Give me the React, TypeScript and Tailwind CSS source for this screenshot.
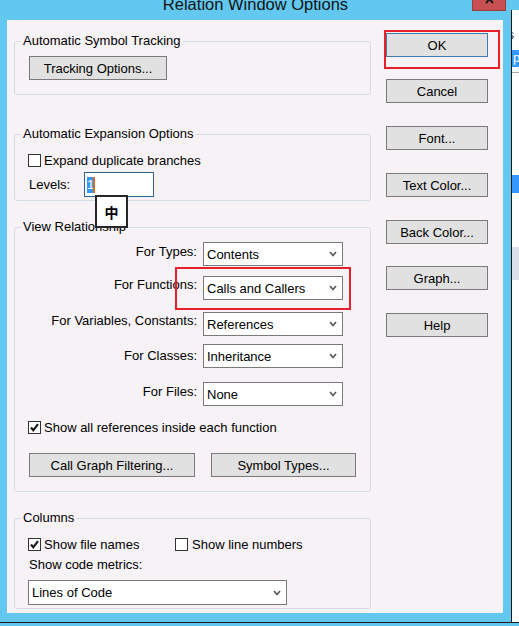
import React from "react";

function Group({ label, className, children }: { label: string; className: string; children?: React.ReactNode }) {
  return (
    <div className={`relative border border-[#d3dce4] rounded-[3px] ${className}`}>
      <span className="absolute left-[6px] -top-[9px] px-[2px] bg-[#f6f2f6] leading-[15px] whitespace-nowrap">{label}</span>
      {children}
    </div>
  );
}

function Btn({ children, className }: { children: React.ReactNode; className: string }) {
  return (
    <div className={`flex items-center justify-center bg-[#e1e1e1] border leading-[15px] whitespace-nowrap ${className}`}>
      {children}
    </div>
  );
}

function Chevron() {
  return (
    <svg width="8" height="6" viewBox="0 0 8 6" className="shrink-0">
      <polyline points="1,1 4,4.5 7,1" fill="none" stroke="#5a5a5a" strokeWidth="1.7" />
    </svg>
  );
}

function Select({ value, className }: { value: string; className: string }) {
  return (
    <div className={`flex items-center justify-between bg-white border border-[#7a7a7a] pl-[3px] pr-[5px] leading-[15px] whitespace-nowrap ${className}`}>
      <span>{value}</span>
      <Chevron />
    </div>
  );
}

function Check({ checked }: { checked: boolean }) {
  return (
    <div className="w-[13px] h-[13px] shrink-0 border border-[#333333] bg-white flex items-center justify-center">
      {checked && (
        <svg width="11" height="11" viewBox="0 0 11 11">
          <polyline points="2,5.5 4.3,8.3 9,2.2" fill="none" stroke="#1a1a1a" strokeWidth="2.2" />
        </svg>
      )}
    </div>
  );
}

function FieldRow({ label, value, labelClass, rowClass }: { label: string; value: string; labelClass: string; rowClass: string }) {
  return (
    <div className={`flex items-start ${rowClass}`}>
      <div className={`w-[182px] text-right leading-[15px] whitespace-nowrap ${labelClass}`}>{label}</div>
      <Select value={value} className="ml-[6px] w-[140px] h-[24px]" />
    </div>
  );
}

function Client() {
  return (
    <div className="relative w-[496px] h-[593px] bg-[#f6f2f6] flex text-[13px] text-black">
      {/* left column */}
      <div className="pl-[7px] pt-[21px] flex flex-col">
        <Group label="Automatic Symbol Tracking" className="w-[357px] h-[54px]">
          <div className="pl-[14px] pt-[14px]">
            <Btn className="w-[138px] h-[24px] border-[#7a7a7a]">Tracking Options...</Btn>
          </div>
        </Group>

        <Group label="Automatic Expansion Options" className="mt-[39px] w-[357px] h-[67px]">
          <div className="pl-[13px] pt-[19px] flex flex-col">
            <div className="flex items-center h-[13px] gap-[3px]">
              <Check checked={false} />
              <span className="leading-[15px] whitespace-nowrap">Expand duplicate branches</span>
            </div>
            <div className="mt-[5px] flex items-center">
              <span className="ml-[1px] w-[55px] leading-[15px]">Levels:</span>
              <div className="w-[70px] h-[25px] bg-white border border-[#2f6593] flex items-center pl-[2px]">
                <span className="bg-[#3399ff] text-white leading-[16px] h-[16px] px-[0px] w-[6px] overflow-hidden">1</span>
                <span className="w-[2px] h-[16px] bg-[#e06a1c]" />
              </div>
            </div>
          </div>
        </Group>

        <Group label="View Relationship" className="mt-[26px] w-[357px] h-[265px]">
          <div className="pt-[14px] flex flex-col">
            <FieldRow label="For Types:" value="Contents" labelClass="mt-[2px]" rowClass="" />
            <FieldRow label="For Functions:" value="Calls and Callers" labelClass="mt-[1px]" rowClass="mt-[10px]" />
            <FieldRow label="For Variables, Constants:" value="References" labelClass="mt-[1px]" rowClass="mt-[12px]" />
            <FieldRow label="For Classes:" value="Inheritance" labelClass="mt-[4px]" rowClass="mt-[8px]" />
            <FieldRow label="For Files:" value="None" labelClass="mt-[2px]" rowClass="mt-[14px]" />
            <div className="mt-[15px] pl-[13px] flex items-center h-[13px] gap-[3px]">
              <Check checked={true} />
              <span className="leading-[15px] whitespace-nowrap">Show all references inside each function</span>
            </div>
            <div className="mt-[19px] pl-[14px] flex">
              <Btn className="w-[166px] h-[24px] border-[#7a7a7a]">Call Graph Filtering...</Btn>
              <Btn className="ml-[16px] w-[145px] h-[24px] border-[#7a7a7a]">Symbol Types...</Btn>
            </div>
          </div>
        </Group>

        <Group label="Columns" className="mt-[26px] w-[357px] h-[91px]">
          <div className="pl-[13px] pt-[19px] flex flex-col">
            <div className="flex items-center h-[13px]">
              <div className="w-[147px] flex items-center gap-[3px]">
                <Check checked={true} />
                <span className="leading-[15px] whitespace-nowrap">Show file names</span>
              </div>
              <div className="flex items-center gap-[4px]">
                <Check checked={false} />
                <span className="leading-[15px] whitespace-nowrap">Show line numbers</span>
              </div>
            </div>
            <div className="mt-[6px] ml-[1px] leading-[15px]">Show code metrics:</div>
            <Select value="Lines of Code" className="mt-[8px] w-[259px] h-[25px]" />
          </div>
        </Group>
      </div>

      {/* right column */}
      <div className="ml-[15px] pt-[13px] flex flex-col">
        <Btn className="w-[102px] h-[24px] border-[#3c7fb1]">OK</Btn>
        <Btn className="mt-[22px] w-[102px] h-[24px] border-[#7a7a7a]">Cancel</Btn>
        <Btn className="mt-[23px] w-[102px] h-[24px] border-[#7a7a7a]">Font...</Btn>
        <Btn className="mt-[23px] w-[102px] h-[24px] border-[#7a7a7a]">Text Color...</Btn>
        <Btn className="mt-[23px] w-[102px] h-[24px] border-[#7a7a7a]">Back Color...</Btn>
        <Btn className="mt-[22px] w-[102px] h-[24px] border-[#7a7a7a]">Graph...</Btn>
        <Btn className="mt-[23px] w-[102px] h-[24px] border-[#7a7a7a]">Help</Btn>
      </div>

      {/* annotations / overlays */}
      <div className="absolute left-[377px] top-[10px] w-[116px] h-[39px] border-2 border-[#e8202a]" />
      <div className="absolute left-[168px] top-[247px] w-[176px] h-[43px] border-2 border-[#e8202a]" />
      <div className="absolute left-[88px] top-[175px] w-[33px] h-[33px] border-2 border-[#262626] bg-white flex items-center justify-center">
        <span className="text-[14px] font-bold leading-[16px] font-['Noto_Sans_CJK_SC',sans-serif]">中</span>
      </div>
    </div>
  );
}

function RightStrip() {
  return (
    <div className="w-[7px] h-[622px] flex flex-col overflow-hidden bg-white">
      <div className="h-[10px] bg-[#63c8ef]" />
      <div className="h-[40px] bg-white text-[12px] leading-[14px] text-[#333] pt-[18px] -ml-[4px]">s</div>
      <div className="h-[17px] bg-[#3399ff] text-white text-[13px] leading-[15px] pl-[1px] overflow-hidden">p</div>
      <div className="h-[5px] bg-white" />
      <div className="h-[1px] bg-[#a9a9a9]" />
      <div className="h-[102px] bg-white" />
      <div className="h-[18px] bg-[#3399ff]" />
      <div className="h-[54px] bg-white" />
      <div className="h-[33px] bg-[#dde1ec]" />
      <div className="flex-1 bg-white" />
    </div>
  );
}

export default function App() {
  return (
    <div className="w-[519px] h-[626px] overflow-hidden flex flex-col bg-[#63c8ef] font-['Liberation_Sans',Arial,sans-serif]">
      <div className="flex h-[622px]">
        <div className="w-[511px] flex flex-col bg-[#63c8ef]">
          <div className="relative h-[20px] flex justify-center">
            <span className="-mt-[4px] leading-[16px] text-[16.5px] text-[#111] whitespace-nowrap">Relation Window Options</span>
            <div className="absolute left-[472px] top-0 w-[34px] h-[11px] bg-[#c75050] border border-t-0 border-[#9e3a3a] overflow-hidden">
              <svg width="34" height="11" viewBox="0 0 34 11">
                <line x1="11" y1="-7" x2="20" y2="3" stroke="#1a1a1a" strokeWidth="2" />
                <line x1="22" y1="-7" x2="13" y2="3" stroke="#1a1a1a" strokeWidth="2" />
              </svg>
            </div>
          </div>
          <div className="flex pl-[7px] pr-[8px]">
            <Client />
          </div>
        </div>
        <div className="w-[1px] mt-[10px] bg-[#1a1a1a]" />
        <RightStrip />
      </div>
      <div className="h-[1px] bg-[#1a1a1a]" />
      <div className="flex-1 bg-[#63c8ef]" />
    </div>
  );
}
